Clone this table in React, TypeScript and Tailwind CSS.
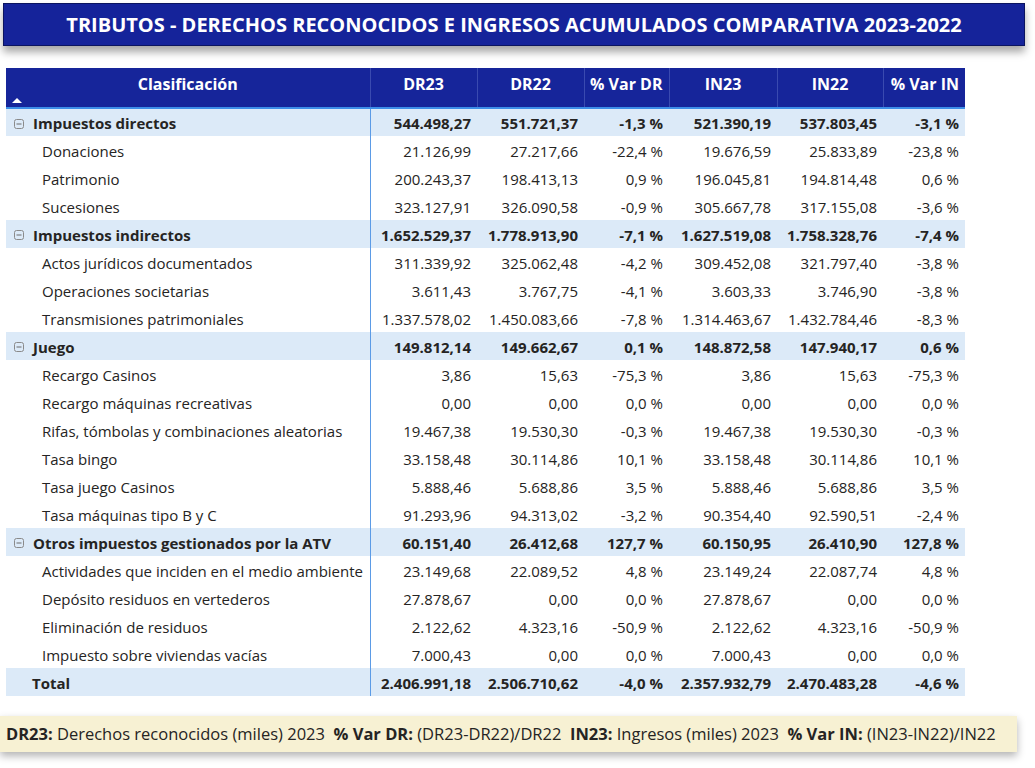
import React from 'react';

type Row = {
  label: string;
  values: string[];
  kind: 'group' | 'item' | 'total';
};

const ROWS: Row[] = [
  { label: 'Impuestos directos', kind: 'group', values: ['544.498,27', '551.721,37', '-1,3 %', '521.390,19', '537.803,45', '-3,1 %'] },
  { label: 'Donaciones', kind: 'item', values: ['21.126,99', '27.217,66', '-22,4 %', '19.676,59', '25.833,89', '-23,8 %'] },
  { label: 'Patrimonio', kind: 'item', values: ['200.243,37', '198.413,13', '0,9 %', '196.045,81', '194.814,48', '0,6 %'] },
  { label: 'Sucesiones', kind: 'item', values: ['323.127,91', '326.090,58', '-0,9 %', '305.667,78', '317.155,08', '-3,6 %'] },
  { label: 'Impuestos indirectos', kind: 'group', values: ['1.652.529,37', '1.778.913,90', '-7,1 %', '1.627.519,08', '1.758.328,76', '-7,4 %'] },
  { label: 'Actos jurídicos documentados', kind: 'item', values: ['311.339,92', '325.062,48', '-4,2 %', '309.452,08', '321.797,40', '-3,8 %'] },
  { label: 'Operaciones societarias', kind: 'item', values: ['3.611,43', '3.767,75', '-4,1 %', '3.603,33', '3.746,90', '-3,8 %'] },
  { label: 'Transmisiones patrimoniales', kind: 'item', values: ['1.337.578,02', '1.450.083,66', '-7,8 %', '1.314.463,67', '1.432.784,46', '-8,3 %'] },
  { label: 'Juego', kind: 'group', values: ['149.812,14', '149.662,67', '0,1 %', '148.872,58', '147.940,17', '0,6 %'] },
  { label: 'Recargo Casinos', kind: 'item', values: ['3,86', '15,63', '-75,3 %', '3,86', '15,63', '-75,3 %'] },
  { label: 'Recargo máquinas recreativas', kind: 'item', values: ['0,00', '0,00', '0,0 %', '0,00', '0,00', '0,0 %'] },
  { label: 'Rifas, tómbolas y combinaciones aleatorias', kind: 'item', values: ['19.467,38', '19.530,30', '-0,3 %', '19.467,38', '19.530,30', '-0,3 %'] },
  { label: 'Tasa bingo', kind: 'item', values: ['33.158,48', '30.114,86', '10,1 %', '33.158,48', '30.114,86', '10,1 %'] },
  { label: 'Tasa juego Casinos', kind: 'item', values: ['5.888,46', '5.688,86', '3,5 %', '5.888,46', '5.688,86', '3,5 %'] },
  { label: 'Tasa máquinas tipo B y C', kind: 'item', values: ['91.293,96', '94.313,02', '-3,2 %', '90.354,40', '92.590,51', '-2,4 %'] },
  { label: 'Otros impuestos gestionados por la ATV', kind: 'group', values: ['60.151,40', '26.412,68', '127,7 %', '60.150,95', '26.410,90', '127,8 %'] },
  { label: 'Actividades que inciden en el medio ambiente', kind: 'item', values: ['23.149,68', '22.089,52', '4,8 %', '23.149,24', '22.087,74', '4,8 %'] },
  { label: 'Depósito residuos en vertederos', kind: 'item', values: ['27.878,67', '0,00', '0,0 %', '27.878,67', '0,00', '0,0 %'] },
  { label: 'Eliminación de residuos', kind: 'item', values: ['2.122,62', '4.323,16', '-50,9 %', '2.122,62', '4.323,16', '-50,9 %'] },
  { label: 'Impuesto sobre viviendas vacías', kind: 'item', values: ['7.000,43', '0,00', '0,0 %', '7.000,43', '0,00', '0,0 %'] },
  { label: 'Total', kind: 'total', values: ['2.406.991,18', '2.506.710,62', '-4,0 %', '2.357.932,79', '2.470.483,28', '-4,6 %'] },
];

const HEADERS = ['DR23', 'DR22', '% Var DR', 'IN23', 'IN22', '% Var IN'];
const WIDTHS = ['w-[107px]', 'w-[107px]', 'w-[85px]', 'w-[108px]', 'w-[106px]', 'w-[82px]'];

function CollapseIcon() {
  return (
    <svg width="10" height="10" viewBox="0 0 10 10" className="shrink-0">
      <rect x="0.5" y="0.5" width="9" height="9" rx="2" fill="none" stroke="#8a8a8a" strokeWidth="1" />
      <line x1="2.5" y1="5" x2="7.5" y2="5" stroke="#6a6a6a" strokeWidth="1" />
    </svg>
  );
}

export default function App() {
  return (
    <div className="w-[1035px] h-[768px] bg-white overflow-hidden relative font-['Open_Sans',sans-serif] text-[#252423]">
      <div className="mx-[3px] mt-[3px] h-[43px] bg-[#15239a] border border-[#0b1460] shadow-[0_6px_8px_rgba(0,0,0,0.35)] flex items-center justify-center w-[1022px]">
        <h1 className="text-white font-bold text-[20px]">
          TRIBUTOS - DERECHOS RECONOCIDOS E INGRESOS ACUMULADOS COMPARATIVA 2023-2022
        </h1>
      </div>

      <div className="mt-[22px] ml-[6px] w-[959px]">
        <table className="table-fixed border-collapse w-[959px] text-[15px]">
          <thead>
            <tr className="bg-[#16259a] text-white h-[40px] border-b-2 border-[#3d8ee8]">
              <th className="w-[364px] relative font-bold text-[16px] align-top pt-[4px] border-r border-[#3a4ab0]">
                Clasificación
                <span className="absolute left-[6px] bottom-[4px] w-0 h-0 border-l-[5px] border-r-[5px] border-b-[5px] border-l-transparent border-r-transparent border-b-white" />
              </th>
              {HEADERS.map((h, i) => (
                <th
                  key={h}
                  className={`${WIDTHS[i]} font-bold text-[16px] align-top pt-[4px] ${i < 5 ? 'border-r border-[#3a4ab0]' : ''} ${i === 2 || i === 5 ? 'text-right pr-[6px]' : 'text-center'}`}
                >
                  {h}
                </th>
              ))}
            </tr>
          </thead>
          <tbody>
            {ROWS.map((r) => {
              const bold = r.kind !== 'item';
              return (
                <tr key={r.label} className={`h-[28px] ${bold ? 'bg-[#dceaf8] font-bold' : 'bg-white'}`}>
                  <td className="border-r border-[#5b9be6] p-0 pt-[2px]">
                    {r.kind === 'group' && (
                      <div className="flex items-center gap-[9px] pl-[8px]">
                        <CollapseIcon />
                        <span>{r.label}</span>
                      </div>
                    )}
                    {r.kind === 'item' && <div className="pl-[36px]">{r.label}</div>}
                    {r.kind === 'total' && <div className="pl-[26px]">{r.label}</div>}
                  </td>
                  {r.values.map((v, i) => (
                    <td key={i} className="text-right whitespace-nowrap p-0 pt-[2px] pr-[6px]">
                      {v}
                    </td>
                  ))}
                </tr>
              );
            })}
          </tbody>
        </table>
      </div>

      <div className="absolute left-0 top-[716px] w-[1017px] h-[36px] bg-[#f7f1d3] shadow-[0_4px_8px_rgba(0,0,0,0.3)] flex items-center pl-[6px] text-[16.5px] text-[#252423] whitespace-nowrap">
        <b>DR23:</b>&nbsp;Derechos reconocidos (miles) 2023&nbsp;&nbsp;<b>% Var DR:</b>&nbsp;(DR23-DR22)/DR22&nbsp;&nbsp;<b>IN23:</b>&nbsp;Ingresos (miles) 2023&nbsp;&nbsp;<b>% Var IN:</b>&nbsp;(IN23-IN22)/IN22
      </div>
    </div>
  );
}
